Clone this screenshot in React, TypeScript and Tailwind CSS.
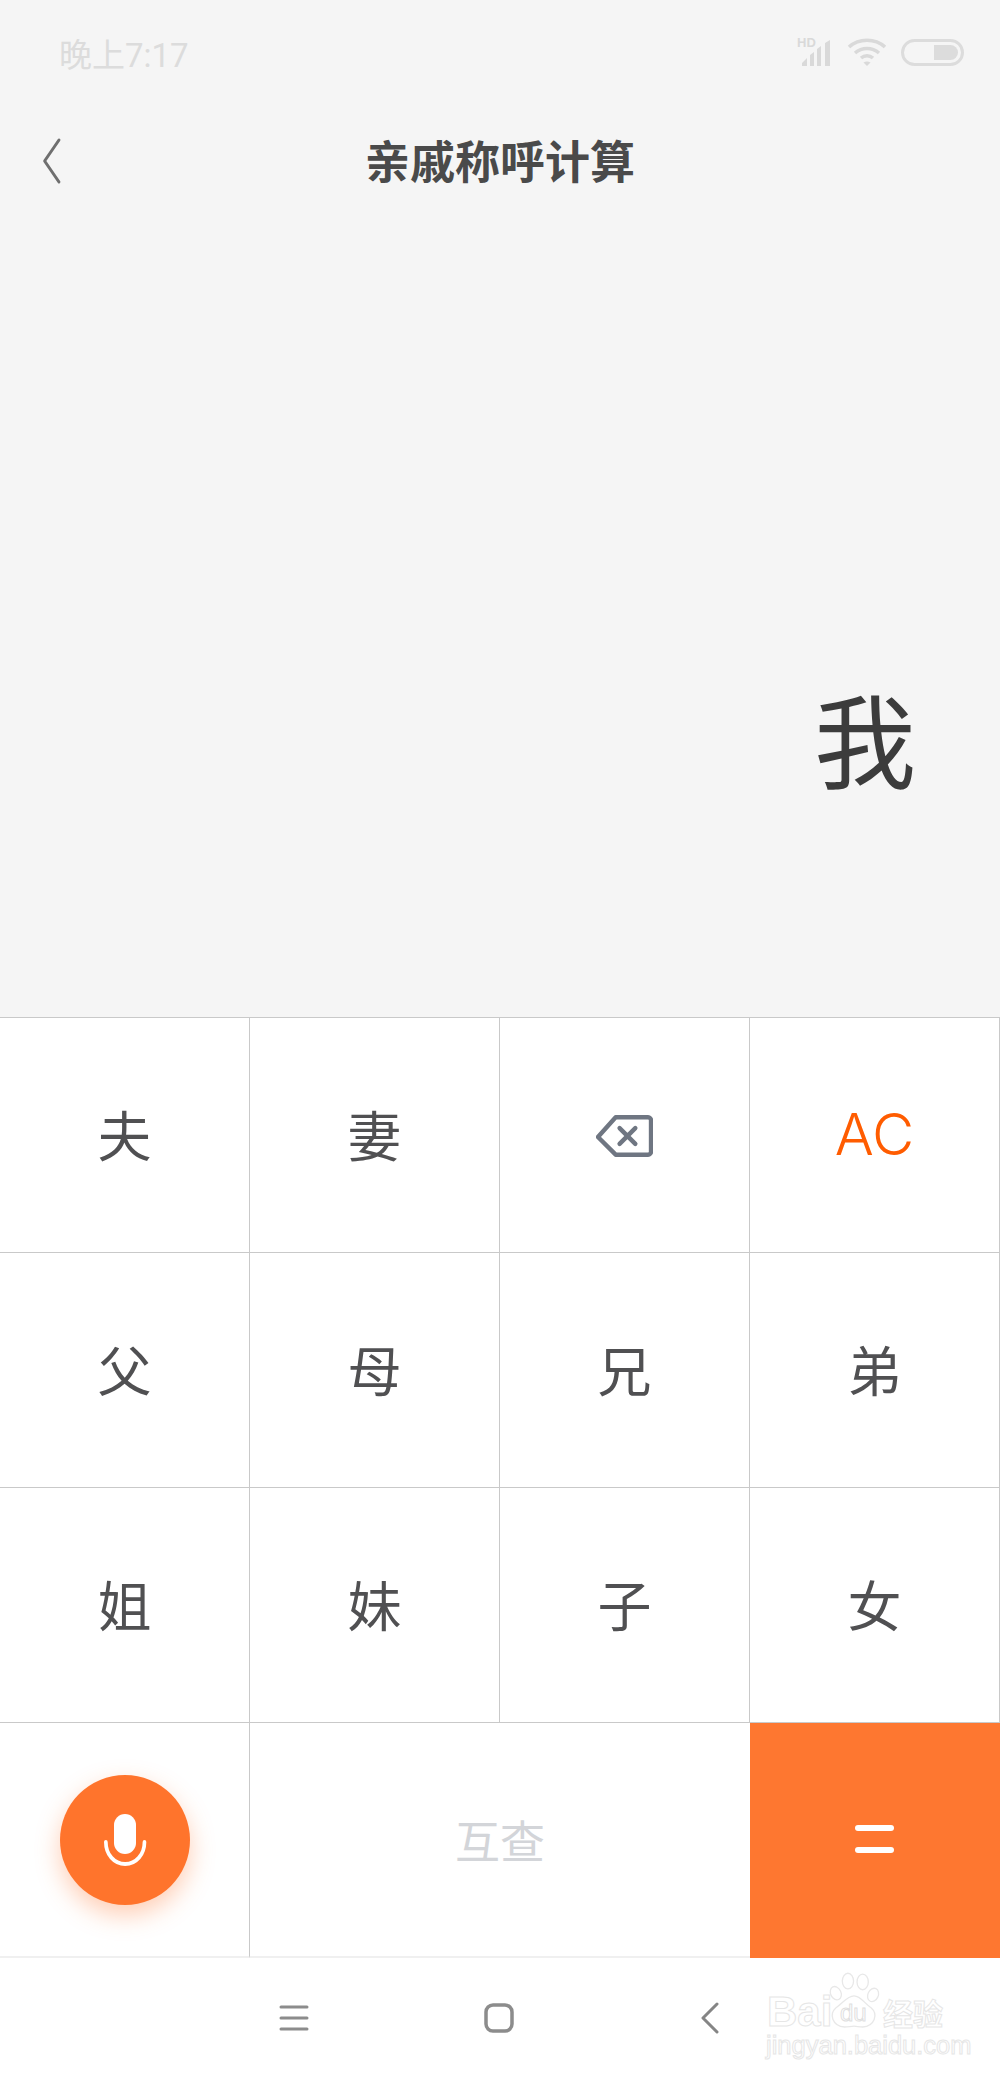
import React from "react";

const CJK = "font-['Noto_Sans_CJK_SC','Noto_Sans',sans-serif]";

function Key({ label }: { label: string }) {
  return (
    <div className="h-[235px] flex items-center justify-center border-r border-b border-[#c9c9c9] bg-white text-[54px] leading-none text-[#505052] pb-[3px]">
      {label}
    </div>
  );
}

function Baidu() {
  return (
    <div className="absolute left-[766px] top-[1962px] w-[190px] h-[96px] text-white">
      <svg className="absolute left-[62px] top-[10px]" width="52" height="58" viewBox="0 0 60 66" fill="#ffffff" stroke="#e8e8e8" strokeWidth="1.5">
        <ellipse cx="9" cy="24" rx="6" ry="8" transform="rotate(-25 9 24)" />
        <ellipse cx="23" cy="10" rx="6.5" ry="9" />
        <ellipse cx="40" cy="11" rx="6.5" ry="9" />
        <ellipse cx="52" cy="26" rx="6" ry="8" transform="rotate(25 52 26)" />
        <path d="M30 27c8 0 12 9 20 14 8 7 4 21-10 22-4 0-7-1-10-1s-7 1-11 1c-14-1-18-15-10-22 8-5 13-14 21-14z" />
      </svg>
      <div className="absolute left-[1px] top-[32px] font-['Liberation_Sans',sans-serif] font-bold text-[42px] leading-[36px] text-white [-webkit-text-stroke:1px_#e6e6e6]">Bai</div>
      <div className="absolute left-[74px] top-[38px] font-['Liberation_Sans',sans-serif] text-[24px] leading-[26px] text-white [-webkit-text-stroke:1px_#dfdfdf]">du</div>
      <div className={`absolute left-[117px] top-[32px] ${CJK} font-bold text-[30px] leading-[36px] whitespace-nowrap text-white [-webkit-text-stroke:1px_#e6e6e6]`}>经验</div>
      <div className="absolute left-[0px] top-[69px] font-['Liberation_Sans',sans-serif] text-[25.5px] leading-[28px] whitespace-nowrap text-white [-webkit-text-stroke:1px_#e6e6e6]">jingyan.baidu.com</div>
    </div>
  );
}

export default function App() {
  return (
    <div className={`relative w-[1000px] h-[2078px] bg-white overflow-hidden ${CJK}`}>
      <div className="h-[1017px] bg-[#f5f5f5] flex flex-col">
        <div className="h-[110px] pl-[59px] pr-[36px] flex items-center justify-between">
          <span className="text-[33px] leading-none text-[#dcdcdc] font-['Roboto','Noto_Sans_CJK_SC',sans-serif]">晚上7:17</span>
          <div className="flex items-center gap-[14px] mt-[-6px]">
            <svg width="36" height="30" viewBox="0 0 36 30" fill="#d9d9d9" className="mt-[-2px]">
              <text x="0" y="11" fontSize="13" fontWeight="700" fontFamily="Liberation Sans">HD</text>
              <path d="M5 30v-3l5-5v8zM13 30v-11l4-3v14zM20 30V13l4-3v20zM28 30V7l5-3v26z" />
            </svg>
            <svg width="40" height="30" viewBox="0 0 40 30" fill="none" stroke="#d9d9d9" strokeWidth="3.6">
              <path d="M2 10c10-9 26-9 36 0" />
              <path d="M8 16c7-6 17-6 24 0" />
              <path d="M14 21c3.500-3 8.500-3 12 0" />
              <path d="M20 29l-3.500-3.500c2-1.500 5-1.500 7 0z" fill="#d9d9d9" stroke="none" />
            </svg>
            <div className="w-[63px] h-[27px] rounded-full border-[3px] border-[#dcdcdc] flex justify-end items-center p-[3px]">
              <div className="w-[24px] h-[15px] bg-[#dcdcdc] rounded-r-full" />
            </div>
          </div>
        </div>
        <div className="h-[100px] relative flex items-center justify-center">
          <svg className="absolute left-[39px] top-[28px]" width="24" height="46" viewBox="0 0 24 46" fill="none" stroke="#6f6f6f" strokeWidth="3" strokeLinecap="round" strokeLinejoin="round">
            <path d="M20 2 4 23l16 21" transform="matrix(.9 0 0 1 2 0)" />
          </svg>
          <span className="text-[45px] leading-none font-bold text-[#4a4a4a] mt-[-2px]">亲戚称呼计算</span>
        </div>
        <div className="flex-1 flex items-end justify-end pr-[84px] pb-[229px]">
          <span className="text-[102px] leading-none text-[#3c3c3c]">我</span>
        </div>
      </div>

      <div className="grid grid-cols-4 border-t border-[#c9c9c9]">
        <Key label="夫" />
        <Key label="妻" />
        <div className="h-[235px] flex items-center justify-center border-r border-b border-[#c9c9c9] pt-[2px]">
          <svg width="57" height="42" viewBox="0 0 58 42" fill="none" stroke="#6f7682" strokeWidth="4.5" strokeLinecap="round" strokeLinejoin="round">
            <path d="M20 2h33a3 3 0 0 1 3 3v32a3 3 0 0 1-3 3H20L2 22 20 2z" />
            <path d="M24 13l16 16M40 13 24 29" />
          </svg>
        </div>
        <div className="h-[235px] flex items-center justify-center border-r border-b border-[#c9c9c9] text-[58px] leading-none text-[#ff5c00] font-['Inter',sans-serif] font-light pb-[2px]">AC</div>
        <Key label="父" />
        <Key label="母" />
        <Key label="兄" />
        <Key label="弟" />
        <Key label="姐" />
        <Key label="妹" />
        <Key label="子" />
        <Key label="女" />
        <div className="h-[235px] flex items-center justify-center border-r border-[#c9c9c9] border-b-2 border-b-[#f0f0f0]">
          <div className="w-[130px] h-[130px] rounded-full bg-[#ff742c] flex items-center justify-center shadow-[0_10px_24px_rgba(255,116,44,0.35)]">
            <svg width="46" height="52" viewBox="0 0 46 52" fill="none">
              <rect x="12" y="0" width="22" height="40" rx="11" fill="#ffffff" />
              <path d="M2 28c0 13 9 23 21 23s21-10 21-23" stroke="#ffffff" strokeWidth="4" strokeLinecap="round" transform="translate(2 1) scale(.92 .96)" />
            </svg>
          </div>
        </div>
        <div className="col-span-2 h-[235px] flex items-center justify-center border-b-2 border-b-[#f0f0f0] text-[45px] leading-none text-[#d3d5d9]">互查</div>
        <div className="h-[235px] flex flex-col items-center justify-center gap-[16px] bg-[#fe7730] pb-[4px] pr-[2px]">
          <div className="w-[39px] h-[6px] rounded-full bg-white" />
          <div className="w-[39px] h-[6px] rounded-full bg-white" />
        </div>
      </div>

      <div className="h-[120px] flex items-center pl-[279px]">
        <svg width="30" height="28" viewBox="0 0 30 28" stroke="#8c8c8c" strokeWidth="3" strokeLinecap="round">
          <path d="M2 3h26M2 14h26M2 25h26" />
        </svg>
        <svg className="ml-[175px]" width="30" height="30" viewBox="0 0 30 30" fill="none" stroke="#8c8c8c" strokeWidth="3.5">
          <rect x="2" y="2" width="26" height="26" rx="7" />
        </svg>
        <svg className="ml-[186px]" width="20" height="32" viewBox="0 0 20 32" fill="none" stroke="#858585" strokeWidth="3" strokeLinecap="round" strokeLinejoin="round">
          <path d="M17 2 3 16l14 14" />
        </svg>
      </div>

      <Baidu />
    </div>
  );
}
